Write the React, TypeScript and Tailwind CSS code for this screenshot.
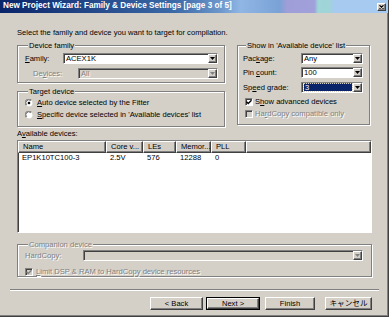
import React from "react";

const sunken =
  "border border-t-[#808080] border-l-[#808080] border-b-white border-r-white shadow-[inset_1px_1px_0_#404040]";
const raised =
  "border border-t-white border-l-white border-b-[#404040] border-r-[#404040] shadow-[inset_-1px_-1px_0_#808080]";
const dim = "text-[#808080] [text-shadow:1px_1px_0_#fff]";

function DropArrow({ disabled }: { disabled?: boolean }) {
  return (
    <div className={`w-[9px] h-full shrink-0 flex items-center justify-center bg-[#d4d0c8] ${raised}`}>
      <svg width="5" height="3" viewBox="0 0 5 3">
        <path d="M0 0h5L2.5 3z" fill={disabled ? "#808080" : "#000"} />
      </svg>
    </div>
  );
}

function Combo({ value, className, disabled, selected }: { value?: string; className: string; disabled?: boolean; selected?: boolean }) {
  return (
    <div className={`h-[11px] flex ${sunken} ${disabled ? "bg-[#d4d0c8]" : "bg-white"} ${className}`}>
      <div className={`flex-1 flex items-center pl-[2px] leading-none ${disabled ? dim : ""}`}>
        {selected ? (
          <div className="flex-1 h-[7px] flex items-center pl-[1px] mr-[1px] bg-[#0a246a] text-white outline-1 outline-dotted outline-[#d4d0c8]">{value}</div>
        ) : (
          value
        )}
      </div>
      <DropArrow disabled={disabled} />
    </div>
  );
}

function Group({ title, className, disabled, children }: { title: string; className: string; disabled?: boolean; children: React.ReactNode }) {
  return (
    <fieldset className={`border border-[#808080] shadow-[1px_1px_0_#fff,inset_1px_1px_0_#fff] ${className}`}>
      <legend className={`ml-[3px] px-[1px] leading-[9px] bg-[#d4d0c8] ${disabled ? dim : ""}`}>{title}</legend>
      {children}
    </fieldset>
  );
}

function Radio({ checked }: { checked?: boolean }) {
  return (
    <svg width="8" height="8" viewBox="0 0 8 8" className="shrink-0">
      <circle cx="4" cy="4" r="3.6" fill="#fff" />
      <path d="M1 6.5A3.6 3.6 0 0 1 6.5 1" fill="none" stroke="#808080" strokeWidth="0.9" />
      <path d="M1.7 5.8A2.7 2.7 0 0 1 5.8 1.7" fill="none" stroke="#404040" strokeWidth="0.8" />
      <path d="M7 1.5A3.6 3.6 0 0 1 1.5 7" fill="none" stroke="#d4d0c8" strokeWidth="0.8" />
      {checked && <circle cx="4" cy="4" r="1.3" fill="#000" />}
    </svg>
  );
}

function Check({ checked, disabled }: { checked?: boolean; disabled?: boolean }) {
  return (
    <div className={`w-[8px] h-[8px] shrink-0 flex items-center justify-center ${sunken} ${disabled ? "bg-[#d4d0c8]" : "bg-white"}`}>
      {checked && (
        <svg width="6" height="6" viewBox="0 0 6 6">
          <path d="M0.5 2.8L2.2 4.5L5.5 1.2" fill="none" stroke={disabled ? "#808080" : "#000"} strokeWidth="1.3" />
        </svg>
      )}
    </div>
  );
}

function U({ children }: { children: React.ReactNode }) {
  return <span className="underline underline-offset-1">{children}</span>;
}

function Btn({ label, className, primary }: { label: string; className: string; primary?: boolean }) {
  return (
    <div className={`h-[13px] ${primary ? "border border-black" : ""} ${className}`}>
      <div className={`h-full flex items-center justify-center bg-[#d4d0c8] ${raised}`}>
        <span className="leading-none">{label}</span>
      </div>
    </div>
  );
}

const cols = [
  { name: "Name", w: "w-[88px]" },
  { name: "Core v...", w: "w-[37px]" },
  { name: "LEs", w: "w-[33px]" },
  { name: "Memor...", w: "w-[35px]" },
  { name: "PLL", w: "w-[35px]" },
];
const row = ["EP1K10TC100-3", "2.5V", "576", "12288", "0"];

export default function App() {
  return (
    <div className="w-[389px] h-[317px] bg-[#d4d0c8] flex flex-col overflow-hidden border-r border-b border-[#404040] shadow-[inset_-1px_-1px_0_#808080] font-['Liberation_Sans','Noto_Sans_CJK_JP',sans-serif] text-[7.6px] text-black">
      <div className="h-[13px] shrink-0 flex items-center justify-between pl-[3px] pr-[2px] bg-[linear-gradient(90deg,#0a246a_0%,#3b6aa8_45%,#6e98cc_57%,#8fb6e4_62%,#7aa2d6_72%,#a09ed8_74%,#a0a0da_81%,#9fd6d8_82%,#a0d4d8_85%,#a6caf0_86%,#a6caf0_100%)]">
        <span className="text-white font-bold text-[8.2px] leading-none">New Project Wizard: Family &amp; Device Settings [page 3 of 5]</span>
        <div className={`w-[9px] h-[8px] flex items-center justify-center bg-[#d4d0c8] ${raised}`}>
          <svg width="5" height="4" viewBox="0 0 5 4">
            <path d="M0.5 0.3L4.5 3.7M4.5 0.3L0.5 3.7" stroke="#000" strokeWidth="1.1" />
          </svg>
        </div>
      </div>

      <div className="pl-[17px] mt-[15px] leading-[9px]">Select the family and device you want to target for compilation.</div>

      <div className="flex pl-[17px] mt-[4px]">
        <div className="w-[208px] flex flex-col">
          <Group title="Device family" className="h-[42px] px-[7px] pr-[6px]">
            <div className="flex items-center h-[11px] mt-[3px]">
              <span className="w-[38px] leading-none"><U>F</U>amily:</span>
              <Combo value="ACEX1K" className="w-[155px]" />
            </div>
            <div className="flex items-center h-[11px] mt-[4px]">
              <span className={`w-[53px] pl-[8px] leading-none ${dim}`}>De<U>v</U>ices:</span>
              <Combo value="All" className="w-[140px]" disabled />
            </div>
          </Group>
          <Group title="Target device" className="h-[40px] mt-[4px] px-[7px]">
            <div className="flex items-center gap-[4px] h-[9px] mt-[2px]">
              <Radio checked />
              <span className="leading-none"><U>A</U>uto device selected by the Fitter</span>
            </div>
            <div className="flex items-center gap-[4px] h-[9px] mt-[3px]">
              <Radio />
              <span className="leading-none"><U>S</U>pecific device selected in 'Available devices' list</span>
            </div>
          </Group>
        </div>

        <Group title="Show in 'Available device' list" className="w-[133px] h-[84px] ml-[12px] pl-[5px] pr-[6px]">
          <div className="flex items-center h-[11px] mt-[3px]">
            <span className="w-[58px] leading-none">Pac<U>k</U>age:</span>
            <Combo value="Any" className="w-[62px]" />
          </div>
          <div className="flex items-center h-[11px] mt-[3px]">
            <span className="w-[58px] leading-none">Pin <U>c</U>ount:</span>
            <Combo value="100" className="w-[62px]" />
          </div>
          <div className="flex items-center h-[11px] mt-[4px]">
            <span className="w-[58px] leading-none">Sp<U>e</U>ed grade:</span>
            <Combo value="3" className="w-[62px]" selected />
          </div>
          <div className="flex items-center gap-[2px] h-[9px] mt-[4px] ml-[2px]">
            <Check checked />
            <span className="leading-none">S<U>h</U>ow advanced devices</span>
          </div>
          <div className="flex items-center gap-[2px] h-[9px] mt-[3px] ml-[2px]">
            <Check disabled />
            <span className={`leading-none ${dim}`}>Ha<U>r</U>dCopy compatible only</span>
          </div>
        </Group>
      </div>

      <div className="pl-[17px] mt-[2px] leading-[9px]">A<U>v</U>ailable devices:</div>
      <div className={`ml-[17px] mt-[2px] w-[355px] h-[93px] bg-white flex flex-col ${sunken}`}>
        <div className="flex h-[12px] shrink-0">
          {cols.map((c) => (
            <div key={c.name} className={`${c.w} shrink-0 flex items-center pl-[4px] bg-[#d4d0c8] ${raised}`}>
              <span className="leading-none">{c.name}</span>
            </div>
          ))}
          <div className={`flex-1 bg-[#d4d0c8] ${raised}`} />
        </div>
        <div className="flex h-[10px] items-center">
          {row.map((v, i) => (
            <div key={i} className={`${cols[i].w} shrink-0 pl-[4px] leading-none`}>{v}</div>
          ))}
        </div>
      </div>

      <Group title="Companion device" disabled className="ml-[17px] mt-[7px] w-[355px] h-[37px] px-[7px]">
        <div className="flex items-center h-[11px] mt-[1px]">
          <span className={`w-[58px] leading-none ${dim}`}>HardCopy:</span>
          <Combo className="w-[280px]" disabled />
        </div>
        <div className="flex items-center gap-[3px] h-[9px] mt-[6px]">
          <Check checked disabled />
          <span className={`leading-none ${dim}`}><U>L</U>imit DSP &amp; RAM to HardCopy device resources</span>
        </div>
      </Group>

      <div className="ml-[10px] mt-[12px] w-[369px] h-[2px] border-t border-t-[#808080] border-b border-b-white" />

      <div className="flex mt-[6px]">
        <Btn label="< Back" className="ml-[150px] w-[53px]" />
        <Btn label="Next >" className="ml-[3px] w-[54px]" primary />
        <Btn label="Finish" className="ml-[5px] w-[50px]" />
        <Btn label="キャンセル" className="ml-[10px] w-[47px]" />
      </div>
    </div>
  );
}
